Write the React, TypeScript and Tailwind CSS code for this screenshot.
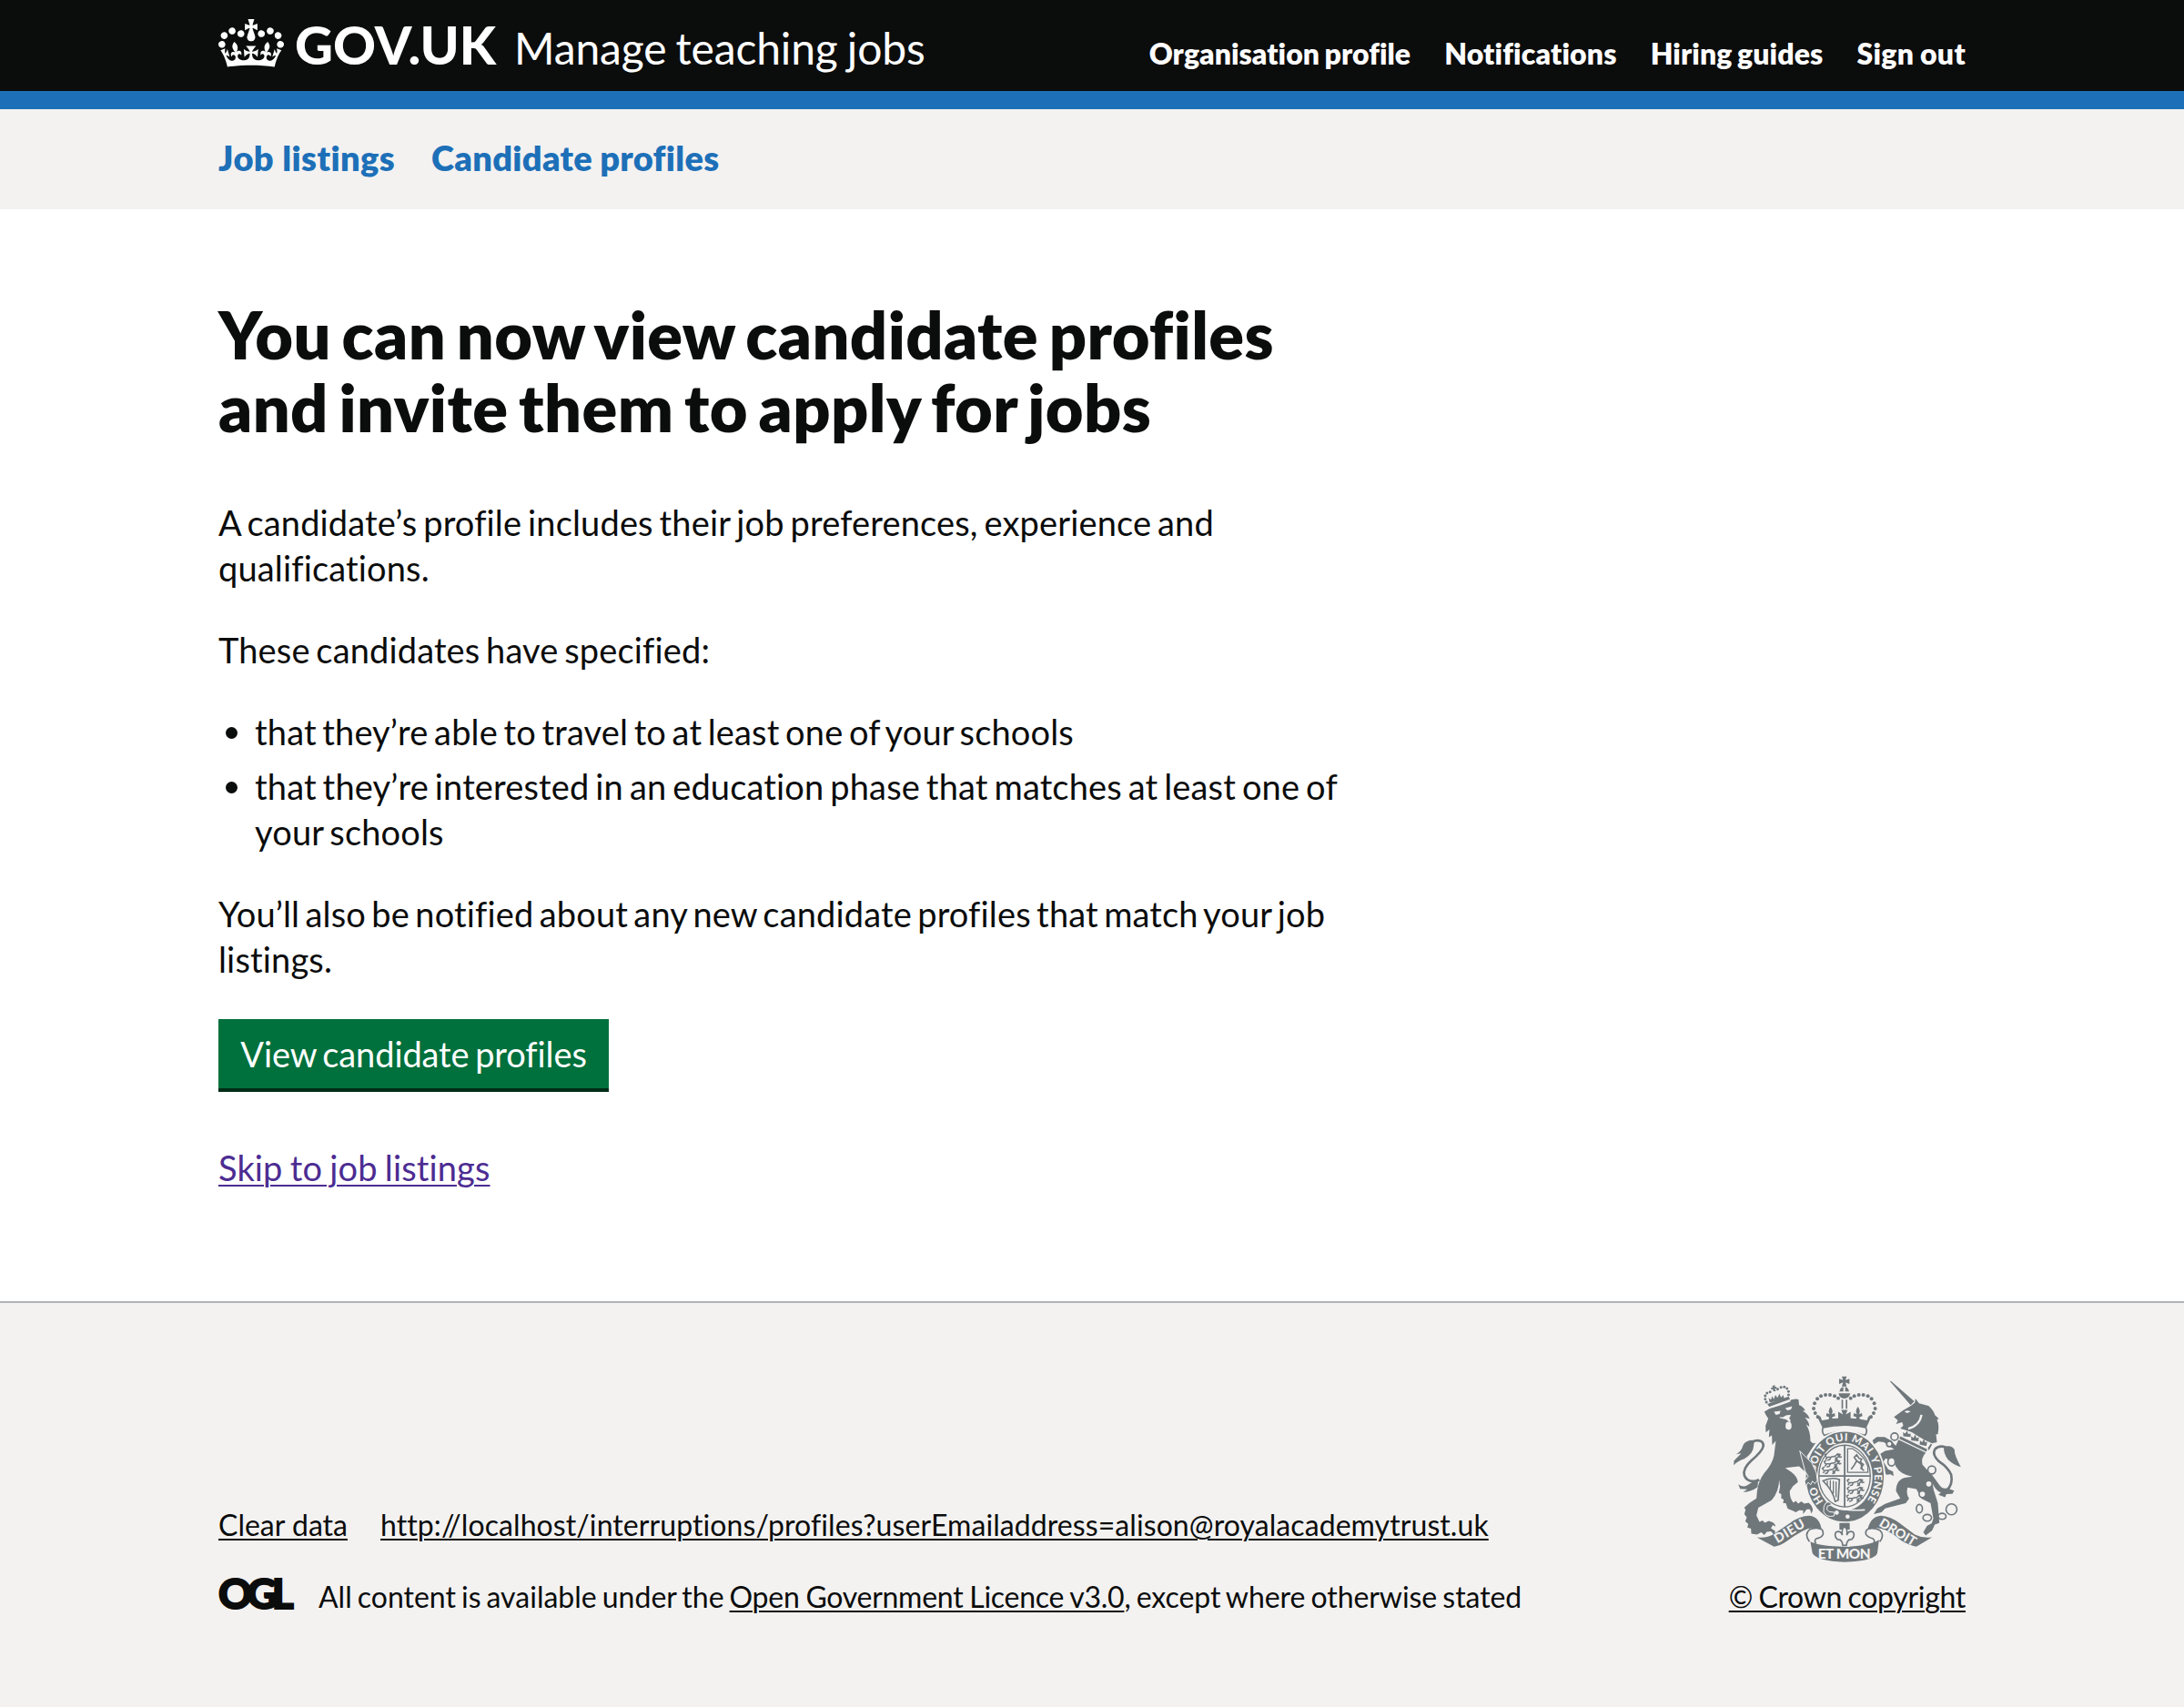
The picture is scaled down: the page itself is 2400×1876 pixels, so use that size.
import React from "react";

const INK = "#6f777b";
const PAPER = "#f3f2f1";

function Crown() {
  return (
    <svg className="mt-[21px] h-[53px] w-[72px] shrink-0" viewBox="0 0 132 97" fill="currentColor" aria-hidden="true">
      <path fillRule="evenodd" d="M25 30.2c3.5 1.5 7.7-.2 9.1-3.7 1.5-3.6-.2-7.8-3.9-9.2-3.6-1.4-7.6.3-9.1 3.9-1.4 3.5.3 7.5 3.9 9zM9 39.5c3.6 1.5 7.8-.2 9.2-3.7 1.5-3.6-.2-7.8-3.9-9.1-3.6-1.5-7.6.2-9.1 3.8-1.4 3.5.3 7.5 3.8 9zM4.4 57.2c3.5 1.5 7.7-.2 9.1-3.8 1.5-3.6-.2-7.7-3.9-9.1-3.5-1.5-7.6.3-9.1 3.8-1.4 3.5.3 7.6 3.9 9.1zm38.3-21.4c3.5 1.5 7.7-.2 9.1-3.8 1.5-3.6-.2-7.7-3.9-9.1-3.6-1.5-7.6.3-9.1 3.8-1.3 3.6.4 7.7 3.9 9.1zm64.4-5.6c-3.6 1.5-7.8-.2-9.1-3.7-1.5-3.6.2-7.8 3.8-9.2 3.6-1.4 7.7.3 9.2 3.9 1.3 3.5-.4 7.5-3.9 9zm15.9 9.3c-3.6 1.5-7.7-.2-9.1-3.7-1.5-3.6.2-7.8 3.7-9.1 3.6-1.5 7.7.2 9.2 3.8 1.5 3.5-.3 7.5-3.8 9zm4.7 17.7c-3.6 1.5-7.8-.2-9.2-3.8-1.5-3.6.2-7.7 3.9-9.1 3.6-1.5 7.7.3 9.2 3.8 1.3 3.5-.4 7.6-3.9 9.1zM89.3 35.8c-3.6 1.5-7.8-.2-9.2-3.8-1.4-3.6.2-7.7 3.9-9.1 3.6-1.5 7.7.3 9.2 3.8 1.4 3.6-.3 7.7-3.9 9.1zM69.7 17.7l8.9 4.7V9.3l-8.9 2.8c-.2-.3-.5-.6-.9-.9L72.4 0H59.6l3.5 11.2c-.3.3-.6.5-.9.9l-8.8-2.8v13.1l8.8-4.7c.3.3.6.7.9.9l-5 15.4v.1c-.2.8-.4 1.6-.4 2.4 0 4.1 3.1 7.5 7 8.1h.2c.3 0 .7.1 1 .1.4 0 .7 0 1-.1h.2c4-.6 7.1-4.1 7.1-8.1 0-.8-.1-1.7-.4-2.4V34l-5.1-15.4c.4-.2.7-.6 1-.9zM66 92.8c16.9 0 32.8 1.1 47.1 3.2 4-16.9 8.9-26.7 14-33.5l-9.6-3.4c1 4.9 1.1 7.2 0 10.2-1.5-1.4-3-4.3-4.2-8.7L108.6 76c2.8-2 5-3.2 7.5-3.3-4.4 9.4-10 11.9-13.6 11.2-4.3-.8-6.3-4.6-5.6-7.9 1-4.7 5.7-5.9 8-.5 4.3-8.7-3-11.4-7.6-8.8 7.1-7.2 7.9-13.5 2.1-21.1-8 6.1-8.1 12.3-4.5 20.8-4.7-5.4-12.1-2.5-9.5 6.2 3.4-5.2 7.9-2 7.2 3.1-.6 4.3-6.4 7.8-13.5 7.2-10.3-.9-10.9-8-11.2-13.8 2.5-.5 7.1 1.8 11 7.3L80.2 60c-4.1 4.4-8 5.3-12.3 5.4 1.4-4.4 8-11.6 8-11.6H55.5s6.4 7.2 7.9 11.6c-4.2-.1-8-1-12.3-5.4l1.4 16.4c3.9-5.5 8.5-7.7 10.9-7.3-.3 5.8-.9 12.8-11.1 13.8-7.2.6-12.9-2.9-13.5-7.2-.7-5 3.8-8.3 7.1-3.1 2.7-8.7-4.6-11.6-9.4-6.2 3.7-8.5 3.6-14.7-4.6-20.8-5.8 7.6-5 13.9 2.2 21.1-4.7-2.6-11.9.1-7.7 8.8 2.3-5.5 7.1-4.2 8.1.5.7 3.3-1.3 7.1-5.7 7.9-3.5.7-9-1.8-13.5-11.2 2.5.1 4.7 1.3 7.5 3.3l-4.7-15.4c-1.2 4.4-2.7 7.2-4.3 8.7-1.1-3-.9-5.3 0-10.2l-9.5 3.4c5 6.9 9.9 16.7 14 33.5 14.8-2.1 30.8-3.2 47.7-3.2z" />
    </svg>
  );
}

const BEADS: [number, number][] = [[102, 93], [90, 86], [75, 82], [60, 82], [45, 86], [33, 95], [24, 110], [21, 127], [26, 142], [35, 155]];
const LION_BEADS: [number, number][] = [[135, 106], [131, 96], [131, 85], [137, 76], [147, 72], [172, 63], [183, 57], [194, 56], [203, 61], [208, 71], [208, 82]];

function PassantLion({ x, y }: { x: number; y: number }) {
  return (
    <g transform={`translate(${x} ${y})`} fill="none" stroke={INK} strokeWidth="4.500">
      <path d="M2 20l6-8 12-1 14-3 8-7 8 2-3 6-7 4v7l-8 2M20 12l-4 8-8 2M34 12l4 9M4 12L0 4l7-4M42 2l8 10 6-2" />
    </g>
  );
}

function RoyalArms() {
  return (
    <svg className="h-[205px] w-[250px]" viewBox="72 64 750 616" fill={INK} aria-hidden="true">
      {/* lion supporter */}
      <g transform="translate(45 45)">
        <path d="M128 138L148 126 205 106Q222 92 241 97L243 116Q256 120 263 134L254 135Q272 144 278 161L262 157Q276 170 277 187L266 180Q281 205 280 234Q287 246 298 240L268 285 292 318 303 345 299 373 286 364 271 378 278 360 268 350 262 335 243 318 222 320 197 323 216 336Q236 350 239 370L222 384 212 400Q212 425 224 438L232 432 240 441 250 434 260 441 274 438Q288 448 288 464L283 474 279 460 268 460 256 476 256 464 243 463 232 470 225 466 205 458 199 440 190 440 192 428 184 424V410L176 406 180 384 177 362Q177 400 152 430L108 455 102 480 112 501 122 497 130 504 142 498Q164 502 165 517L156 512 150 522 164 532 161 545 150 533 136 534 128 545 118 536 104 543 85 540 84 524 72 520 75 508 65 500 70 486 62 476 66 462 62 454 80 438 102 424Q104 370 128 340Q155 310 160 282L166 234 154 247 153 216 143 222 145 196 133 206 132 184 141 160 134 150z" />
        <path d="M138 112L208 87 213 96 144 121z" />
        <path d="M146 108l-4-16 8 6 4-12 5 10 6-14 6 10 7-14 5 12 8-7 3 14z" />
        <path d="M154 52l10-2-2 6 6-1 1 7-6-1 3 9h-9l0-7-6 2-1-7 6 0z" />
        {LION_BEADS.map(([x, y], i) => <circle key={i} cx={x} cy={y} r="4.5" />)}
        <path d="M112 364Q72 375 62 348Q56 326 84 300Q122 268 125 250Q124 228 94 234" fill="none" stroke={INK} strokeWidth="8" />
        <path d="M100 232Q68 228 58 248Q52 270 34 278L52 275 28 299 27 314Q40 300 62 293Q92 275 93 250Q92 240 100 232z" />
        <path d="M42 377Q58 390 72 380L108 358 106 386Q85 402 58 403L72 394 48 392z" />
        <path d="M142 126Q180 116 214 102" fill="none" stroke={PAPER} strokeWidth="4" />
        <g fill={PAPER}>
          <path d="M160 138l22-3-4 10-12 3zM197 126l23-6-4 10-12 3z" />
          <path d="M178 154q8 4 14 0 10-8 24-5l-6 10q8 10 2 14l-12-10-20-4z" />
          <ellipse cx="208" cy="184" rx="10" ry="13" />
        </g>
      </g>

      {/* unicorn supporter */}
      <g transform="translate(510 45)">
        <path d="M77 36L82 37 158 103 146 116z" />
        <path d="M91 155L120 134 147 118 160 108 162 94 174 110 205 118Q222 132 227 150L239 160 233 165Q242 182 236 212L230 212 233 238 217 242Q190 232 170 218L150 205 135 200 112 193 122 183 118 172 98 178 104 166z" />
        <path d="M182 148Q176 184 138 194" fill="none" stroke={PAPER} strokeWidth="7" />
        <path d="M126 138q10-8 20 0l-12 4z" fill={PAPER} />
        <path d="M120 196L216 243 199 272 108 226z" fill={PAPER} />
        <path d="M112 219L201 262 198 270 109 227z" />
        <path d="M122 219l-1-14 7 5 7-10 3 12 8-3 0 12zM148 232l0-14 7 6 7-11 3 12 8-3-1 13zM176 246l1-14 7 6 6-11 4 12 7-3-3 15zM203 257l10-14 4 3-11 20z" />
        <path d="M106 230L196 273Q180 290 185 312L214 345 222 395 236 440 241 505 226 510 217 530 196 546 188 536 200 515 216 506 221 490 212 440 182 425 165 393 136 388Q130 408 141 425L130 440 100 447 62 457 50 470 24 476 36 457 62 442 112 424 98 400Q98 360 132 355L152 352Q112 345 97 318L93 306 64 292 56 302 72 328 88 335 90 350 80 344 66 346 40 304 34 284 62 267 92 262 82 256 58 238 40 236 25 245 20 232 34 221 60 221 82 233 97 250z" />
        <path d="M264 398Q287 380 280 346Q270 322 240 302Q216 280 226 262Q240 246 264 256" fill="none" stroke={INK} strokeWidth="8" />
        <path d="M256 253Q282 246 291 263Q290 280 312 320Q290 315 270 296Q254 278 256 253z" />
        <path d="M205 330L240 378Q250 394 266 390L290 398 284 409 264 410 260 420 238 412 246 404Q226 398 214 362z" />
        <g fill={PAPER} stroke={INK} strokeWidth="5">
          <circle cx="93" cy="220" r="12" />
          <circle cx="76" cy="244" r="9" />
          <ellipse cx="83" cy="303" rx="12" ry="14" />
          <circle cx="216" cy="330" r="13" />
          <circle cx="206" cy="376" r="11" />
          <circle cx="185" cy="410" r="11" />
          <ellipse cx="175" cy="458" rx="10" ry="14" />
          <ellipse cx="201" cy="488" rx="14" ry="11" />
          <ellipse cx="250" cy="483" rx="13" ry="10" />
          <circle cx="281" cy="460" r="18" />
        </g>
      </g>

      {/* imperial crown */}
      <g transform="translate(315 45)">
        <path d="M114 21H130L126 33 139 29V46L126 41 130 54H114L118 41 105 46V29L118 33z" />
        <path d="M106 71Q110 56 119 56V71zM125 56Q134 56 138 71H125z" />
        <path d="M103 77H142Q138 94 122 94 106 94 103 77z" />
        {BEADS.map(([x, y], i) => (
          <g key={i}>
            <circle cx={x} cy={y} r="6" />
            <circle cx={245 - x} cy={y} r="6" />
          </g>
        ))}
        <path d="M113 98h5v30h-5zM127 98h5v30h-5z" />
        <path d="M112 132H133L127 147 143 138V162L122 168 102 162V138L118 147z" />
        <path d="M77 121Q88 134 80 146L90 142 92 152 82 156 84 166H70L72 156 62 152 64 142 74 146Q66 134 77 121zM167 121Q178 134 170 146L180 142 182 152 172 156 174 166H160L162 156 152 152 154 142 164 146Q156 134 167 121z" />
        <path d="M30 148L44 154 48 166Q122 150 197 166L201 154 214 148 195 190Q122 172 50 190z" />
        <path d="M52 190Q122 174 193 190Q200 204 190 216Q122 190 56 216Q46 204 52 190z" fill={PAPER} stroke={INK} strokeWidth="5" />
      </g>

      {/* garter and shield */}
      <g transform="translate(315 45)">
        <ellipse cx="124" cy="352" rx="134" ry="154" fill={PAPER} />
        <ellipse cx="124" cy="352" rx="110" ry="130" fill={PAPER} stroke={INK} strokeWidth="37" />
        <path id="garter-line" d="M124 470A98 118 0 0 1 124 234A98 118 0 0 1 124 470" fill="none" />
        <g fill={PAPER} fontFamily="Lato" fontWeight="900" fontSize="35">
          <text><textPath href="#garter-line" startOffset="82">HO</textPath></text>
          <text><textPath href="#garter-line" startOffset="188" textLength="404">SOIT QUI MAL Y PENSE</textPath></text>
        </g>
        <ellipse cx="123" cy="350" rx="85" ry="102" fill="none" stroke={INK} strokeWidth="4" />
        <path d="M120.500 250h5.500v202h-5.500zM38 347h170v5.500H38z" />
        <PassantLion x={58} y={276} />
        <PassantLion x={56} y={298} />
        <PassantLion x={50} y={320} />
        <path d="M133 260H150Q190 285 200 318V338H133z" fill="none" stroke={INK} strokeWidth="4" />
        <path d="M145 328l10-14 8-14-8-12 8-8 8 12 8 2-4 10 10 8-8 12 10 8M163 300l14 10 4 16" fill="none" stroke={INK} strokeWidth="5" />
        <path d="M52 366Q80 352 106 362L102 430 92 434Q86 400 52 366z" fill="none" stroke={INK} strokeWidth="5" />
        <path d="M66 366V380M76 364V392M86 366V408M95 368V420" stroke={INK} strokeWidth="4" />
        <PassantLion x={132} y={360} />
        <PassantLion x={132} y={386} />
        <PassantLion x={130} y={412} />
        <path d="M66 436Q100 468 190 462" fill="none" stroke={PAPER} strokeWidth="5" />
        <path d="M60 440q14-10 20 4l-14 6q-6 12 6 18l18 2-2 12q-26 6-34-14-2-18 6-28z" stroke={PAPER} strokeWidth="3" />
        <circle cx="97" cy="471" r="7" fill={PAPER} />
        <circle cx="133" cy="484" r="7" fill={PAPER} />
      </g>

      {/* lion's forepaw resting on the garter */}
      <path d="M290 312L330 352 345 385 348 410 340 420 332 412 326 424 318 416 310 428 306 412 318 396 308 380 300 350z" stroke={PAPER} strokeWidth="3" />

      {/* motto scroll */}
      <path d="M421 550h34v22h-34z" />
      <path d="M438 560Q450 574 445 590 452 574 466 580 474 592 462 604L452 606 446 614 444 624H432L430 614 424 606 414 604Q402 592 410 580 424 574 431 590 426 574 438 560z" fill={PAPER} stroke={INK} strokeWidth="5" />
      <path d="M325 612Q350 626 438 629 520 626 552 606L546 650Q536 676 438 679 346 676 332 650z" />
      <path d="M148 597Q180 602 205 586L255 552Q290 526 322 526 356 530 362 572 330 560 300 576 270 592 245 612 225 626 205 628z" />
      <path d="M727 597Q698 602 670 588L622 552Q590 528 558 526 524 528 514 572 545 560 575 574 600 586 625 608 650 624 675 628z" />
      <path d="M364 572Q345 562 322 572 304 588 322 612M364 572Q376 596 344 602 336 610 344 618M512 572Q530 562 554 574 572 590 554 612M512 572Q498 592 532 602 540 608 534 618" fill="none" stroke={INK} strokeWidth="5" />
      <g fill={PAPER} fontFamily="Lato" fontWeight="900" fontSize="43">
        <text transform="translate(216 618) rotate(-31)" textLength="110">DIEU</text>
        <text transform="translate(549 558) rotate(31)" textLength="134">DROIT</text>
        <text x="350" y="669" fontSize="46" textLength="174">ET MON</text>
      </g>
    </svg>
  );
}

function Bullet() {
  return <span className="absolute top-[20px] -left-[32px] size-[13px] rounded-full bg-[#0b0c0c]" />;
}

export default function App() {
  return (
    <div className="h-[1876px] w-[2400px] overflow-hidden bg-white font-['Lato',sans-serif] text-[#0b0c0c] antialiased">
      <header className="h-[120px] border-b-[20px] border-[#1d70b8] bg-[#0b0c0c] text-white">
        <div className="mx-auto flex w-[1920px] items-start">
          <Crown />
          <div className="flex flex-1 items-baseline pt-[17px]">
            <a className="ml-[12px] text-[58px] leading-[58px] font-black tracking-[0.05px]">GOV.UK</a>
            <a className="ml-[20px] text-[48px] tracking-[-0.15px] [word-spacing:-2px]">Manage teaching jobs</a>
            <nav className="ml-auto flex gap-[37px] text-[32px] font-extrabold">
              <a className="tracking-[0.05px] [word-spacing:-2px]">Organisation profile</a>
              <a className="tracking-[0.15px]">Notifications</a>
              <a className="tracking-[0.1px] [word-spacing:-2px]">Hiring guides</a>
              <a className="tracking-[0.3px] [word-spacing:-1px]">Sign out</a>
            </nav>
          </div>
        </div>
      </header>
      <div className="h-[110px] bg-[#f3f2f1]">
        <nav className="mx-auto flex w-[1920px] gap-[40px] pt-[28px] text-[38px] leading-[50px] font-extrabold tracking-[0.4px] text-[#1d70b8]">
          <a>Job listings</a>
          <a className="tracking-[0.3px] [word-spacing:-1px]">Candidate profiles</a>
        </nav>
      </div>
      <main className="mx-auto h-[1200px] w-[1920px] pt-[97px] text-[38px] leading-[50px] tracking-[0.15px]">
        <h1 className="text-[72px] leading-[80px] font-extrabold tracking-[0.4px] [word-spacing:-5.4px]">
          You can now view candidate profiles<br />
          and invite them to apply for jobs
        </h1>
        <p className="mt-[62px] [word-spacing:-3px]">
          A candidate’s profile includes their job preferences, experience and<br />
          qualifications.
        </p>
        <p className="mt-[40px] [word-spacing:-3.2px]">These candidates have specified:</p>
        <ul className="mt-[40px] flex flex-col gap-[10px] pl-[40px]">
          <li className="relative [word-spacing:-3.3px]">
            <Bullet />
            that they’re able to travel to at least one of your schools
          </li>
          <li className="relative [word-spacing:-2.95px]">
            <Bullet />
            that they’re interested in an education phase that matches at least one of<br />
            your schools
          </li>
        </ul>
        <p className="mt-[40px] [word-spacing:-3.55px]">
          You’ll also be notified about any new candidate profiles that match your job<br />
          listings.
        </p>
        <a className="mt-[41px] block h-[80px] w-[429px] border-b-4 border-[#002d18] bg-[#00703c] pt-[13px] text-center tracking-[-0.1px] text-white [word-spacing:-3px]">View candidate profiles</a>
        <a className="mt-[58px] inline-block tracking-[0.12px] text-[#4c2c92] underline decoration-2 underline-offset-[4px] [word-spacing:-1.6px]">Skip to job listings</a>
      </main>
      <footer className="h-[446px] border-t-2 border-[#b1b4b6] bg-[#f3f2f1] text-[32px] leading-[40px] tracking-[0.01px]">
        <div className="mx-auto flex w-[1920px] justify-between">
          <div className="pt-[224px]">
            <div className="flex gap-[36px]">
              <a className="underline decoration-2 underline-offset-[3px]">Clear data</a>
              <a className="tracking-[0.08px] underline decoration-2 underline-offset-[3px]">http://localhost/interruptions/profiles?userEmailaddress=alison@royalacademytrust.uk</a>
            </div>
            <div className="mt-[34px] flex items-baseline">
              <div className="relative top-[1px] w-[110px] text-[46px] leading-[40px] font-black tracking-[-6px] [-webkit-text-stroke:2px_#0b0c0c]">OGL</div>
              <div>
                <span className="[word-spacing:-2.2px]">All content is available under the </span>
                <a className="tracking-[-0.27px] underline decoration-2 underline-offset-[3px] [word-spacing:-1px]">Open Government Licence v3.0</a>
                <span className="tracking-[-0.06px] [word-spacing:-2px]">, except where otherwise stated</span>
              </div>
            </div>
          </div>
          <div className="flex flex-col items-center pt-[80px]">
            <RoyalArms />
            <a className="mt-[18px] tracking-[-0.3px] underline decoration-2 underline-offset-[3px] [word-spacing:-1.5px]">© Crown copyright</a>
          </div>
        </div>
      </footer>
    </div>
  );
}
